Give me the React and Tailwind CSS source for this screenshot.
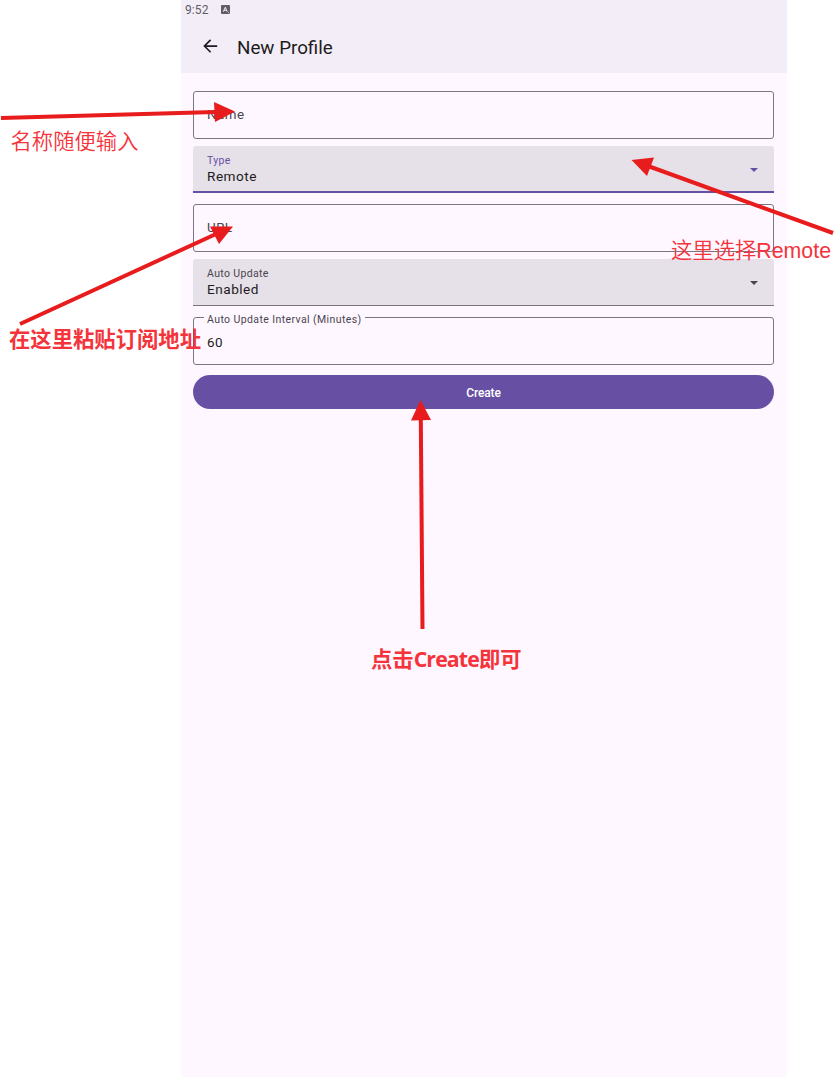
import React from "react";

function OutlinedField({ label, value, className = "" }) {
  return (
    <div className={`relative h-12 rounded-[3px] border border-[#7b7680] px-[13px] ${className}`}>
      {value ? (
        <>
          <span className="absolute -top-[5px] left-[10px] bg-[#fef7ff] px-[3px] text-[10.5px] leading-[14px] tracking-[0.4px] whitespace-nowrap text-[#49454f]">
            {label}
          </span>
          <span className="block pt-px text-[13.4px] leading-[47px] tracking-[0.35px] text-[#1d1b20]">{value}</span>
        </>
      ) : (
        <span className="block text-[13.4px] leading-[46px] tracking-[0.45px] text-[#49454f]">{label}</span>
      )}
    </div>
  );
}

function SelectField({ label, value, active, className = "" }) {
  return (
    <div
      className={`flex h-[47px] items-center justify-between rounded-t-[3px] bg-[#e6e0e9] pr-4 pl-[14px] ${
        active ? "border-b-2 border-[#6750a4]" : "border-b border-[#79747e]"
      } ${className}`}
    >
      <div className="flex h-full flex-col pt-2">
        <span className={`text-[10.5px] leading-[14px] tracking-[0.35px] ${active ? "text-[#6750a4]" : "text-[#49454f]"}`}>
          {label}
        </span>
        <span className="text-[13.6px] leading-[17px] tracking-[0.5px] text-[#1d1b20]">{value}</span>
      </div>
      <svg className={`mt-[2px] h-1 w-2 ${active ? "text-[#6750a4]" : "text-[#49454f]"}`} viewBox="0 0 8 4">
        <path d="M0 0h8L4 4z" fill="currentColor" />
      </svg>
    </div>
  );
}

const arrows = [
  { from: [1, 118], to: [215, 112], head: "214,102 235,111.5 215,122" },
  { from: [833, 233], to: [648, 166], head: "631.5,160 654,157.5 647,176" },
  { from: [20, 324], to: [216, 234], head: "233,226.5 210,226.5 219,244" },
  { from: [422.5, 629], to: [420.8, 418], head: "420.5,400 411,420.5 431,420" },
];

export default function App() {
  return (
    <div className="relative h-[1077px] w-[834px] overflow-hidden bg-white font-[Roboto,'Noto_Sans_CJK_SC',sans-serif]">
      <main className="ml-[181px] flex h-full w-[606px] flex-col bg-[#fef7ff]">
        <header className="h-[73px] shrink-0 bg-[#f3edf7]">
          <div className="flex h-[19px] items-center gap-3 pl-1 text-[#605d64]">
            <span className="pt-px text-[12px] leading-[19px] tracking-[0.1px]">9:52</span>
            <svg className="h-[9px] w-[9px]" viewBox="0 0 9 9">
              <rect width="9" height="9" rx="1" fill="currentColor" />
              <path d="M2.3 6.7 4.3 2.2 6.3 6.7M3 5.3h2.7M7 7.5h.7" fill="none" stroke="#f3edf7" strokeWidth="1" />
            </svg>
          </div>
          <div className="flex h-[54px] items-center pl-[21px] text-[#1d1b20]">
            <svg className="h-4 w-4" viewBox="0 0 16 16" fill="none" stroke="currentColor" strokeWidth="1.6">
              <path d="M8.6 1.9 2.4 8.1l6.2 6.2M2.4 8.1h12.8" />
            </svg>
            <h1 className="ml-[19px] pt-[3px] text-[18.8px] leading-6 font-normal">New Profile</h1>
          </div>
        </header>
        <form className="flex flex-col pt-[18px] pr-[13px] pl-3">
          <OutlinedField label="Name" />
          <SelectField label="Type" value="Remote" active className="mt-[7px]" />
          <OutlinedField label="URL" className="mt-[11px]" />
          <SelectField label="Auto Update" value="Enabled" className="mt-[7px]" />
          <OutlinedField label="Auto Update Interval (Minutes)" value="60" className="mt-[11px]" />
          <button type="button" className="mt-[10px] h-[34px] rounded-full bg-[#6750a4] pt-[2px] text-[12px] font-medium tracking-[-0.1px] text-white">
            Create
          </button>
        </form>
      </main>

      <svg className="pointer-events-none absolute inset-0" width="834" height="1077" viewBox="0 0 834 1077">
        {arrows.map(({ from, to, head }) => (
          <g key={head} fill="#e81c1c" stroke="none">
            <line x1={from[0]} y1={from[1]} x2={to[0]} y2={to[1]} stroke="#e81c1c" strokeWidth="4" />
            <polygon points={head} />
          </g>
        ))}
      </svg>
      <p className="absolute top-[124px] left-[10.5px] font-['Noto_Sans_CJK_SC',sans-serif] text-[21.33px] leading-8 font-[350] whitespace-nowrap text-[#f5333b]">
        名称随便输入
      </p>
      <p className="absolute top-[235px] left-[671px] font-['Liberation_Sans','Noto_Sans_CJK_SC',sans-serif] text-[21.33px] leading-8 font-[350] whitespace-nowrap text-[#f5333b]">
        这里选择Remote
      </p>
      <p className="absolute top-[322px] left-[9px] font-['Noto_Sans_CJK_SC',sans-serif] text-[21.33px] leading-8 font-bold whitespace-nowrap text-[#f5333b]">
        在这里粘贴订阅地址
      </p>
      <p className="absolute top-[643px] left-[371px] font-['Open_Sans','Noto_Sans_CJK_SC',sans-serif] text-[21.33px] leading-8 font-bold whitespace-nowrap text-[#f5333b]">
        点击<span className="tracking-[-0.9px]">Create</span>即可
      </p>
    </div>
  );
}
